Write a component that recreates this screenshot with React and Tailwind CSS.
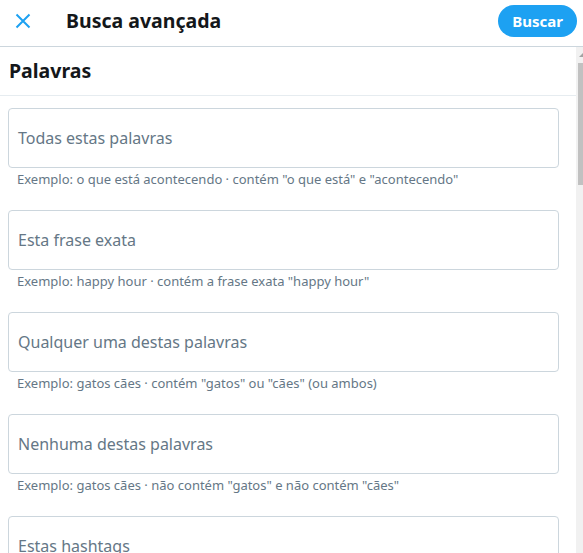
import React from 'react';

const fields = [
  { label: 'Todas estas palavras', hint: 'Exemplo: o que está acontecendo · contém "o que está" e "acontecendo"' },
  { label: 'Esta frase exata', hint: 'Exemplo: happy hour · contém a frase exata "happy hour"' },
  { label: 'Qualquer uma destas palavras', hint: 'Exemplo: gatos cães · contém "gatos" ou "cães" (ou ambos)' },
  { label: 'Nenhuma destas palavras', hint: 'Exemplo: gatos cães · não contém "gatos" e não contém "cães"' },
  { label: 'Estas hashtags', hint: 'Exemplo: #SextaFeira · contém a hashtag #SextaFeira' },
];

const Field = ({ label, hint }) => (
  <div className="pt-3 pb-[11px] pl-2 pr-[17px]">
    <div className="h-[60px] rounded border border-[#ccd6dd] flex items-center px-[9px]">
      <span className="text-[16px] text-[#657786]">{label}</span>
    </div>
    <p className="pt-[3px] pl-[9px] text-[13px] leading-[16px] text-[#657786] whitespace-nowrap">{hint}</p>
  </div>
);

const Scrollbar = () => (
  <div className="w-[7px] shrink-0 bg-[#f1f1f1] flex flex-col">
    <div className="h-[16px] flex items-end justify-end pb-[6px]">
      <svg width="4" height="4" viewBox="0 0 4 4"><path d="M4 0 L4 4 L0 4 Z" fill="#a3a3a3" /></svg>
    </div>
    <div className="ml-[2px] h-[122px] bg-[#c1c1c1]" />
  </div>
);

export default function App() {
  return (
    <div className="w-[583px] h-[553px] overflow-hidden bg-white flex flex-col" style={{ fontFamily: '"Noto Sans", "Open Sans", sans-serif' }}>
      {/* top bar */}
      <header className="h-[47px] shrink-0 border-b border-[#ccd6dd] flex items-center pb-[4px] pl-[14px] pr-[6px]">
        <button className="w-[18px] h-[18px] flex items-center justify-center text-[#1da1f2]">
          <svg width="16" height="16" viewBox="0 0 16 16" fill="none" stroke="currentColor" strokeWidth="2">
            <path d="M1.5 1.5 L14.5 14.5 M14.5 1.5 L1.5 14.5" />
          </svg>
        </button>
        <h1 className="ml-[34px] text-[19.5px] font-bold text-[#14171a]">Busca avançada</h1>
        <button className="ml-auto w-[79px] h-[32px] rounded-full bg-[#1da1f2] text-white text-[15px] font-bold">Buscar</button>
      </header>

      <div className="flex flex-1 min-h-0">
        <main className="flex-1 overflow-hidden">
          <div className="h-[49px] border-b border-[#e6ecf0] flex items-center px-[9px]">
            <h2 className="text-[19.5px] font-bold text-[#14171a]">Palavras</h2>
          </div>
          {fields.map((f) => (
            <Field key={f.label} {...f} />
          ))}
        </main>
        <Scrollbar />
      </div>
    </div>
  );
}
